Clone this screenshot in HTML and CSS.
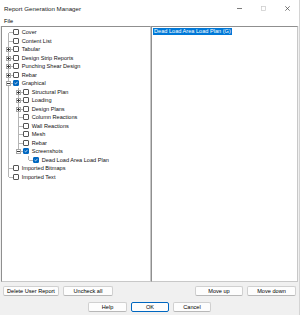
FILE: index.html
```html
<!DOCTYPE html>
<html lang="en">
<head>
    <meta charset="UTF-8">
    <title>Report Generation Manager</title>
    <link rel="stylesheet" href="styles.css">
</head>
<body>
    <div class="window">
        <div class="titlebar">
            <span class="title">Report Generation Manager</span>
            <div class="controls">
                <span class="ctl"><svg width="5" height="5" viewBox="0 0 5 5"><line x1="0" y1="2.5" x2="5" y2="2.5" stroke="#444" stroke-width="0.7"/></svg></span>
                <span class="ctl"><svg width="5" height="5" viewBox="0 0 5 5"><rect x="0.5" y="0.5" width="4" height="4" fill="none" stroke="#c8c8c8" stroke-width="0.7"/></svg></span>
                <span class="ctl"><svg width="5" height="5" viewBox="0 0 5 5"><path d="M0.3 0.3 L4.7 4.7 M4.7 0.3 L0.3 4.7" stroke="#444" stroke-width="0.7"/></svg></span>
            </div>
        </div>
        <div class="menubar"><span>File</span></div>

        <div class="panes">
            <div class="pane tree-pane">
                <ul class="tree">
                    <li><div class="node"><span class="cb"></span>Cover</div></li>
                    <li><div class="node"><span class="cb"></span>Content List</div></li>
                    <li><span class="exp plus"></span><div class="node"><span class="cb"></span>Tabular</div></li>
                    <li><span class="exp plus"></span><div class="node"><span class="cb"></span>Design Strip Reports</div></li>
                    <li><span class="exp plus"></span><div class="node"><span class="cb"></span>Punching Shear Design</div></li>
                    <li><span class="exp plus"></span><div class="node"><span class="cb"></span>Rebar</div></li>
                    <li>
                        <span class="exp"></span>
                        <div class="node"><span class="cb on"><svg width="4" height="4" viewBox="0 0 4 4"><path d="M0.5 2 L1.6 3 L3.5 0.8" fill="none" stroke="#fff" stroke-width="0.7"/></svg></span>Graphical</div>
                        <ul>
                            <li><span class="exp plus"></span><div class="node"><span class="cb"></span>Structural Plan</div></li>
                            <li><span class="exp plus"></span><div class="node"><span class="cb"></span>Loading</div></li>
                            <li><span class="exp plus"></span><div class="node"><span class="cb"></span>Design Plans</div></li>
                            <li><div class="node"><span class="cb"></span>Column Reactions</div></li>
                            <li><div class="node"><span class="cb"></span>Wall Reactions</div></li>
                            <li><div class="node"><span class="cb"></span>Mesh</div></li>
                            <li><div class="node"><span class="cb"></span>Rebar</div></li>
                            <li>
                                <span class="exp"></span>
                                <div class="node"><span class="cb on"><svg width="4" height="4" viewBox="0 0 4 4"><path d="M0.5 2 L1.6 3 L3.5 0.8" fill="none" stroke="#fff" stroke-width="0.7"/></svg></span>Screenshots</div>
                                <ul>
                                    <li><div class="node"><span class="cb on"><svg width="4" height="4" viewBox="0 0 4 4"><path d="M0.5 2 L1.6 3 L3.5 0.8" fill="none" stroke="#fff" stroke-width="0.7"/></svg></span>Dead Load Area Load Plan</div></li>
                                </ul>
                            </li>
                        </ul>
                    </li>
                    <li><div class="node"><span class="cb"></span>Imported Bitmaps</div></li>
                    <li><div class="node"><span class="cb"></span>Imported Text</div></li>
                </ul>
            </div>
            <div class="pane list-pane">
                <div class="item selected">Dead Load Area Load Plan (G)</div>
            </div>
        </div>

        <div class="btn-row">
            <button class="w-delete">Delete User Report</button>
            <button class="w-uncheck">Uncheck all</button>
            <span class="spacer"></span>
            <button class="w-up">Move up</button>
            <button class="w-down">Move down</button>
        </div>
        <div class="btn-row center">
            <button class="w-help">Help</button>
            <button class="w-ok default">OK</button>
            <button class="w-cancel">Cancel</button>
        </div>
    </div>
</body>
</html>
```

FILE: styles.css
```css
body {
    margin: 0;
    font-family: "Liberation Sans", Arial, sans-serif;
    color: #000;
}

.window {
    width: 300px;
    height: 315px;
    background-color: #f0f0f0;
    box-sizing: border-box;
    border-right: 1px solid #d4d4d4;
}

.titlebar {
    height: 16px;
    display: flex;
    align-items: center;
    background-color: #fff;
    padding-left: 4px;
}

.title {
    font-size: 6.2px;
    color: #222;
    flex: 1;
    padding-top: 1px;
}

.controls {
    display: flex;
    height: 16px;
}

.ctl {
    width: 24px;
    display: flex;
    align-items: center;
    justify-content: center;
}

.menubar {
    height: 10px;
    background-color: #fff;
    padding-left: 4px;
    font-size: 5.6px;
    line-height: 10px;
}

.panes {
    display: flex;
    height: 256px;
    margin: 0 1px 0 1px;
}

.pane {
    background-color: #fff;
    border: 1px solid #8f8f8f;
    border-right-color: #c8c8c8;
    border-bottom-color: #c8c8c8;
    box-sizing: border-box;
    font-size: 5.6px;
    color: #111;
}

.tree-pane {
    width: 150px;
}

.list-pane {
    flex: 1;
}

/* tree */
.tree,
.tree ul {
    list-style: none;
    margin: 0;
    padding: 0 0 0 10px;
}

.tree {
    padding: 1px 0 0 11px;
}

.tree li {
    position: relative;
}

.tree li::before {
    content: "";
    position: absolute;
    left: -5px;
    top: 0;
    bottom: 0;
    border-left: 1px solid #b4b4b4;
}

.tree li:last-child::before {
    bottom: auto;
    height: 4.5px;
}

.tree > li:first-child::before {
    top: 4.5px;
}

.tree li::after {
    content: "";
    position: absolute;
    left: -4px;
    top: 4px;
    width: 4px;
    border-top: 1px solid #b4b4b4;
}

.exp {
    position: absolute;
    left: -7px;
    top: 2px;
    width: 5px;
    height: 5px;
    box-sizing: border-box;
    border: 1px solid #a6a6a6;
    background-color: #fff;
    z-index: 1;
}

.exp::before {
    content: "";
    position: absolute;
    left: 0;
    top: 1px;
    width: 3px;
    height: 1px;
    background-color: #3c3c3c;
}

.exp.plus::after {
    content: "";
    position: absolute;
    left: 1px;
    top: 0;
    width: 1px;
    height: 3px;
    background-color: #3c3c3c;
}

.node {
    display: flex;
    align-items: center;
    gap: 2.7px;
    height: 8.5px;
    line-height: 8.5px;
    white-space: nowrap;
}

.cb {
    flex: none;
    width: 6px;
    height: 6px;
    box-sizing: border-box;
    border: 1px solid #555;
    border-radius: 1px;
    background-color: #fff;
    display: flex;
    align-items: center;
    justify-content: center;
}

.cb.on {
    background-color: #0067c0;
    border-color: #0067c0;
}

/* list */
.item {
    display: inline-block;
    margin: 1px 0 0 1px;
    padding: 0 1px;
    line-height: 6.6px;
    white-space: nowrap;
}

.item.selected {
    background-color: #0078d7;
    color: #fff;
}

/* buttons */
.btn-row {
    display: flex;
    gap: 4px;
    padding: 0 3px;
    margin-top: 4px;
}

.btn-row.center {
    justify-content: center;
    margin-top: 6px;
}

.spacer {
    flex: 1;
}

.btn-row button {
    height: 10px;
    padding: 0;
    font-family: "Liberation Sans", Arial, sans-serif;
    font-size: 5.6px;
    color: #000;
    background-color: #fdfdfd;
    border: 1px solid #d0d0d0;
    border-bottom-color: #b8b8b8;
    border-radius: 2px;
}

.btn-row button.default {
    border: 1px solid #0067c0;
}

.w-delete { width: 56px; }
.w-uncheck { width: 50px; }
.w-up { width: 48px; }
.w-down { width: 49px; }
.w-help { width: 39px; }
.w-ok { width: 38px; }
.w-cancel { width: 38px; }
```
